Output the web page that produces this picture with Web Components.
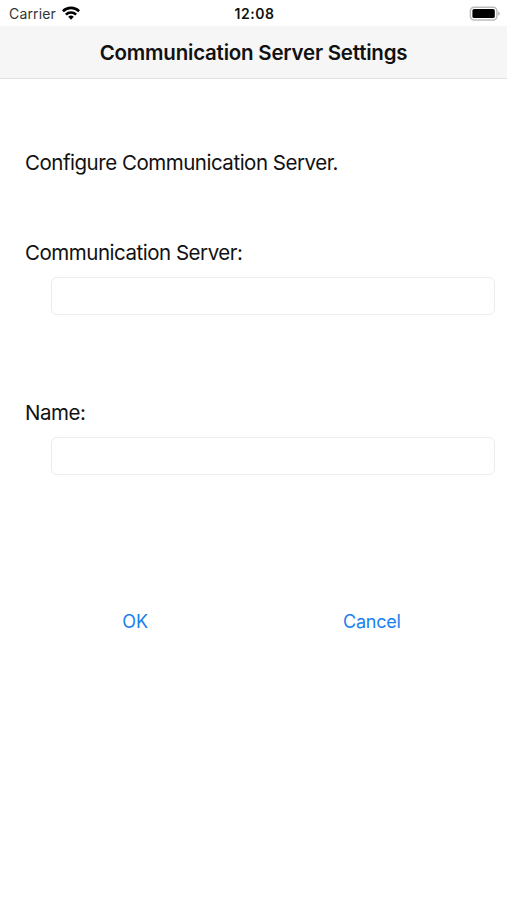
<!DOCTYPE html>
<html lang="en">
<head>
<meta charset="utf-8">
<title>Communication Server Settings</title>
<style>
  body {
    margin: 0;
    background: #fff;
    color: #111;
    font-family: Inter, "Liberation Sans", sans-serif;
  }
</style>
</head>
<body>
<settings-screen>
  <status-bar slot="status" carrier="Carrier" time="12:08"></status-bar>
  <nav-bar slot="nav">Communication Server Settings</nav-bar>
  <span slot="intro">Configure Communication Server.</span>
  <text-field>Communication Server:</text-field>
  <text-field>Name:</text-field>
  <link-button slot="actions">OK</link-button>
  <link-button slot="actions" style="--spacing: -0.25px">Cancel</link-button>
</settings-screen>

<script>
class StatusBar extends HTMLElement {
  constructor() {
    super();
    this.attachShadow({mode: 'open'});
  }

  connectedCallback() {
    const carrier = this.getAttribute("carrier") || "";
    const time = this.getAttribute("time") || "";
    this.shadowRoot.innerHTML = `
      <style>
        :host {
          display: grid;
          grid-template-columns: 1fr auto 1fr;
          align-items: center;
          box-sizing: border-box;
          height: 26px;
          padding: 1px 7px 0 9px;
          font-size: 14px;
          line-height: 18px;
        }
        .left { display: flex; align-items: center; gap: 6px; color: #333; letter-spacing: 0.15px; }
        .time { font-weight: 600; letter-spacing: 0.55px; }
        .battery { justify-self: end; }
        svg { display: block; }
        .left svg { margin-top: -2px; }
      </style>
      <div class="left">
        <span>${carrier}</span>
        <svg width="18" height="14" viewBox="0 0 18 14" fill="none" stroke="#000" stroke-width="2.6">
          <path d="M.9 5.2a11.6 11.6 0 0 1 16.2 0M3.9 8.6a7.3 7.3 0 0 1 10.2 0"/>
          <path d="M6.2 10.8a4 4 0 0 1 5.6 0L9 13.8z" fill="#000" stroke="none"/>
        </svg>
      </div>
      <span class="time">${time}</span>
      <svg class="battery" width="31" height="16" viewBox="0 0 31 16">
        <rect x="1.4" y="1.2" width="26.5" height="12.8" rx="3.7" fill="#fff" stroke="#bcbcbc" stroke-width="1.5"/>
        <rect x="3.4" y="3.1" width="22.4" height="9" rx="1.7" fill="#000"/>
        <path d="M29.2 5.4c2.2.7 2.2 3.7 0 4.4z" fill="#b2b2b2"/>
      </svg>
    `;
  }
}
window.customElements.define('status-bar', StatusBar);

class NavBar extends HTMLElement {
  constructor() {
    super();
    this.attachShadow({mode: 'open'}).innerHTML = `
      <style>
        :host {
          display: flex;
          align-items: center;
          justify-content: center;
          box-sizing: border-box;
          height: 53px;
          padding-top: 1px;
          background: #f6f6f6;
          border-bottom: 1px solid #e2e2e2;
          font-size: 20.5px;
          font-weight: 600;
          line-height: 24px;
          letter-spacing: -0.22px;
          white-space: nowrap;
        }
      </style>
      <slot></slot>
    `;
  }
}
window.customElements.define('nav-bar', NavBar);

class TextField extends HTMLElement {
  constructor() {
    super();
    this.attachShadow({mode: 'open', delegatesFocus: true}).innerHTML = `
      <style>
        :host { display: block; height: 160px; }
        label {
          display: block;
          padding-left: 25px;
          font-size: 20.5px;
          line-height: 24px;
          letter-spacing: -0.48px;
        }
        input {
          display: block;
          box-sizing: border-box;
          width: calc(100% - 63px);
          height: 38px;
          margin: 12px 12px 0 51px;
          padding: 0 9px;
          border: 1px solid #ececec;
          border-radius: 6px;
          background: #fff;
          font: inherit;
          font-size: 18px;
          outline: none;
        }
      </style>
      <label for="input"><slot></slot></label>
      <input type="text" id="input">
    `;
  }
}
window.customElements.define('text-field', TextField);

class LinkButton extends HTMLElement {
  constructor() {
    super();
    this.attachShadow({mode: 'open'}).innerHTML = `
      <style>
        :host { display: flex; justify-content: center; }
        button {
          padding: 0;
          border: 0;
          background: none;
          color: #1a80ef;
          font: inherit;
          font-size: 18px;
          line-height: 24px;
          letter-spacing: var(--spacing, 0);
        }
      </style>
      <button type="button"><slot></slot></button>
    `;
  }
}
window.customElements.define('link-button', LinkButton);

class SettingsScreen extends HTMLElement {
  constructor() {
    super();
    this.attachShadow({mode: 'open'}).innerHTML = `
      <style>
        :host { display: block; min-height: 100vh; }
        .intro {
          margin: 72px 0 66px;
          padding-left: 25px;
          font-size: 20.5px;
          line-height: 24px;
          letter-spacing: -0.48px;
        }
        .actions {
          display: grid;
          grid-template-columns: 1fr 1fr;
          padding: 49px 17px 0 17px;
        }
      </style>
      <slot name="status"></slot>
      <slot name="nav"></slot>
      <div class="intro"><slot name="intro"></slot></div>
      <slot></slot>
      <div class="actions"><slot name="actions"></slot></div>
    `;
  }
}
window.customElements.define('settings-screen', SettingsScreen);
</script>
</body>
</html>
